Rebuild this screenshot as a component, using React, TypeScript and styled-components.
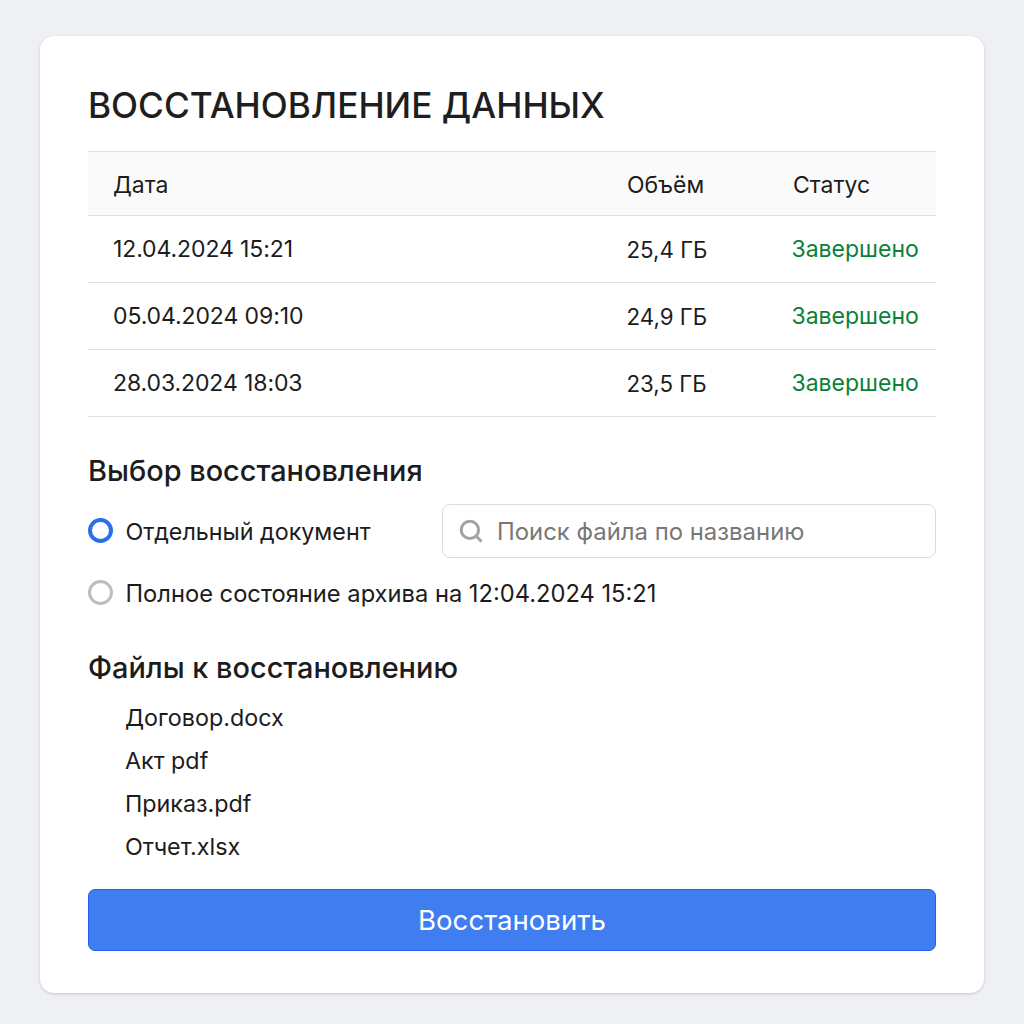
import styled, { createGlobalStyle } from 'styled-components';
import { Search } from 'lucide-react';

const rows = [
  { date: '12.04.2024 15:21', size: '25,4 ГБ', status: 'Завершено' },
  { date: '05.04.2024 09:10', size: '24,9 ГБ', status: 'Завершено' },
  { date: '28.03.2024 18:03', size: '23,5 ГБ', status: 'Завершено' },
];

const files = ['Договор.docx', 'Акт pdf', 'Приказ.pdf', 'Отчет.xlsx'];

export default function App() {
  return (
    <S.Page>
      <GlobalStyle />
      <S.Card>
        <S.Title>ВОССТАНОВЛЕНИЕ ДАННЫХ</S.Title>
        <S.Table>
          <S.HeadRow>
            <S.Cell>Дата</S.Cell>
            <S.Cell>Объём</S.Cell>
            <S.Cell>Статус</S.Cell>
          </S.HeadRow>
          {rows.map(({ date, size, status }) => (
            <S.Row key={date}>
              <S.DateCell>{date}</S.DateCell>
              <S.SizeCell>{size}</S.SizeCell>
              <S.Status>{status}</S.Status>
            </S.Row>
          ))}
        </S.Table>

        <S.ChoiceTitle>Выбор восстановления</S.ChoiceTitle>
        <S.OptionRow>
          <S.Radio $checked />
          <S.OptionLabel>Отдельный документ</S.OptionLabel>
          <S.SearchBox>
            <Search size={26} color="#a3a3a3" strokeWidth={2.8} />
            <S.SearchText>Поиск файла по названию</S.SearchText>
          </S.SearchBox>
        </S.OptionRow>
        <S.OptionRowSecond>
          <S.Radio />
          <S.OptionLabel $wide>Полное состояние архива на 12:04.2024 15:21</S.OptionLabel>
        </S.OptionRowSecond>

        <S.FilesTitle>Файлы к восстановлению</S.FilesTitle>
        <S.FileList>
          {files.map((name) => (
            <S.FileItem key={name}>{name}</S.FileItem>
          ))}
        </S.FileList>

        <S.RestoreButton>Восстановить</S.RestoreButton>
      </S.Card>
    </S.Page>
  );
}

const GlobalStyle = createGlobalStyle`
  html, body {
    margin: 0;
    padding: 0;
    background: #eef0f4;
    font-family: Inter, "Liberation Sans", sans-serif;
    color: #1c1c1c;
  }
`;

const S = {
  Page: styled.div`
    box-sizing: border-box;
    width: 1024px;
    height: 1024px;
    padding: 36px 40px 0;
  `,

  Card: styled.div`
    box-sizing: border-box;
    width: 944px;
    height: 957px;
    padding: 48px 48px 0;
    background: #fff;
    border-radius: 14px;
    box-shadow: 0 1px 3px rgba(0, 0, 0, 0.18);
  `,

  Title: styled.h1`
    margin: 0;
    height: 67px;
    line-height: 42px;
    font-size: 35.2px;
    font-weight: 500;
    color: #1e1e1e;
  `,

  Table: styled.div`
    border-top: 1px solid #e0e0e0;
  `,

  HeadRow: styled.div`
    display: grid;
    grid-template-columns: 514px 166px 1fr;
    align-items: center;
    height: 61px;
    padding: 2px 0 0 25px;
    background: #fafafa;
    border-bottom: 1px solid #e0e0e0;
    font-size: 23px;
  `,

  Row: styled.div`
    display: grid;
    grid-template-columns: 513.5px 165px 1fr;
    align-items: center;
    height: 66px;
    padding-left: 25px;
    border-bottom: 1px solid #e0e0e0;
    font-size: 23px;
  `,

  Cell: styled.div``,

  DateCell: styled.div`
    letter-spacing: -0.1px;
  `,

  SizeCell: styled.div`
    font-size: 22.3px;
  `,

  Status: styled.div`
    color: #0b7f3a;
  `,

  ChoiceTitle: styled.h2`
    margin: 36px 0 0;
    line-height: 36px;
    font-size: 28.9px;
    font-weight: 500;
  `,

  OptionRow: styled.div`
    display: flex;
    align-items: center;
    margin-top: 15px;
    height: 54px;
  `,

  OptionRowSecond: styled.div`
    display: flex;
    align-items: center;
    margin-top: 15px;
    height: 40px;
  `,

  Radio: styled.span<{ $checked?: boolean }>`
    box-sizing: border-box;
    flex: none;
    width: 25px;
    height: 25px;
    margin-bottom: 2px;
    border-radius: 50%;
    border: ${({ $checked }) => ($checked ? '4px solid #2a6fec' : '3px solid #bdbdbd')};
    background: #fff;
  `,

  OptionLabel: styled.span<{ $wide?: boolean }>`
    margin-left: 12.5px;
    font-size: ${({ $wide }) => ($wide ? '23.7px' : '23.3px')};
    white-space: nowrap;
  `,

  SearchBox: styled.div`
    box-sizing: border-box;
    display: flex;
    align-items: center;
    gap: 13px;
    margin-left: auto;
    width: 494px;
    height: 54px;
    padding: 0 15px;
    border: 1px solid #dcdcdc;
    border-radius: 8px;
    background: #fff;
  `,

  SearchText: styled.span`
    font-size: 23.9px;
    color: #777;
  `,

  FilesTitle: styled.h2`
    margin: 37px 0 0;
    line-height: 36px;
    font-size: 28.9px;
    font-weight: 500;
  `,

  FileList: styled.ul`
    display: flex;
    flex-direction: column;
    gap: 13px;
    margin: 17px 0 0;
    padding: 0 0 0 37px;
    list-style: none;
  `,

  FileItem: styled.li`
    height: 30px;
    line-height: 30px;
    font-size: 23.3px;
  `,

  RestoreButton: styled.button`
    display: block;
    box-sizing: border-box;
    width: 100%;
    height: 62px;
    margin-top: 27px;
    border: 1px solid #1f63ea;
    border-radius: 7px;
    background: #407df0;
    color: #fff;
    font-family: inherit;
    font-size: 27.6px;
    font-weight: 400;
  `,
};
